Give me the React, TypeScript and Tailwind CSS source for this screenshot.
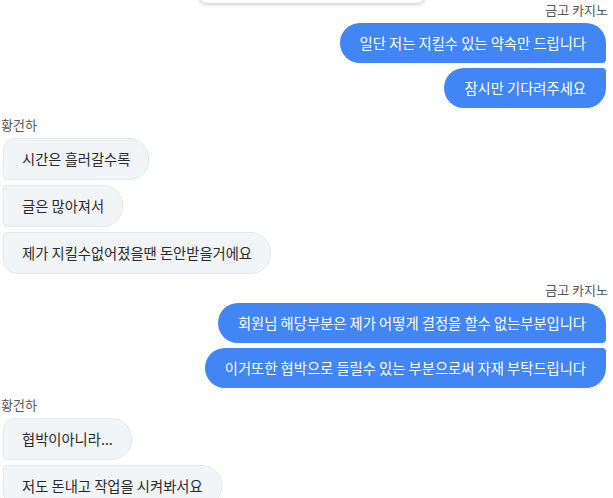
import React from 'react';

type Side = 'me' | 'them';

interface Group {
  side: Side;
  name: string;
  messages: string[];
}

const groups: Group[] = [
  { side: 'me', name: '금고 카지노', messages: ['일단 저는 지킬수 있는 약속만 드립니다', '잠시만 기다려주세요'] },
  { side: 'them', name: '황건하', messages: ['시간은 흘러갈수록', '글은 많아져서', '제가 지킬수없어졌을땐 돈안받을거에요'] },
  { side: 'me', name: '금고 카지노', messages: ['회원님 해당부분은 제가 어떻게 결정을 할수 없는부분입니다', '이거또한 협박으로 들릴수 있는 부분으로써 자재 부탁드립니다'] },
  { side: 'them', name: '황건하', messages: ['협박이아니라...', '저도 돈내고 작업을 시켜봐서요'] },
];

// 말풍선 모서리: 그룹 안 위치에 따라 안쪽 모서리만 작게
function myCorners(i: number, n: number) {
  if (n === 1) return 'rounded-[20px]';
  if (i === 0) return 'rounded-[20px] rounded-br-[4px]';
  if (i === n - 1) return 'rounded-[20px] rounded-tr-[4px]';
  return 'rounded-[20px] rounded-r-[4px]';
}

function theirCorners(i: number, n: number) {
  if (n === 1) return 'rounded-[20px]';
  if (i === 0) return 'rounded-[20px] rounded-tl-[12px] rounded-bl-[4px]';
  if (i === n - 1) return 'rounded-[20px] rounded-tl-[4px] rounded-bl-[14px]';
  return 'rounded-[20px] rounded-l-[4px]';
}

function MessageGroup({ group, first }: { group: Group; first: boolean }) {
  const mine = group.side === 'me';
  const spacing = first ? '' : mine ? 'mt-[8px]' : 'mt-[9px]';
  return (
    <div className={`flex flex-col gap-[5px] ${spacing} ${mine ? 'items-end' : 'items-start'}`}>
      <div className={`text-[13px] leading-4 text-[#555] ${mine ? 'pr-0' : 'pl-[1px]'}`}>
        {group.name}
      </div>
      {group.messages.map((msg, i) =>
        mine ? (
          <div
            key={msg}
            className={`mr-[2px] bg-[#4285f4] px-5 py-[10px] text-[14.3px] leading-5 text-white ${myCorners(i, group.messages.length)}`}
          >
            {msg}
          </div>
        ) : (
          <div
            key={msg}
            className={`ml-[3px] border border-[#e3e9ee] bg-[#f1f5f8] px-[18px] py-[10px] text-[14.3px] leading-5 text-[#2a2a2a] ${theirCorners(i, group.messages.length)}`}
          >
            {msg}
          </div>
        )
      )}
    </div>
  );
}

export default function App() {
  return (
    <div
      className="relative h-[498px] w-full overflow-hidden bg-white"
      style={{ fontFamily: '"Noto Sans CJK KR", "Noto Sans", sans-serif' }}
    >
      {/* 위쪽에 잘려 보이는 떠 있는 카드 */}
      <div className="absolute left-[199px] top-[-40px] h-[43px] w-[226px] rounded-lg bg-white shadow-[0_1px_4px_rgba(0,0,0,0.25)]" />
      <div className="flex flex-col pr-[5px] pt-[2px]">
        {groups.map((g, i) => (
          <MessageGroup key={i} group={g} first={i === 0} />
        ))}
      </div>
    </div>
  );
}
